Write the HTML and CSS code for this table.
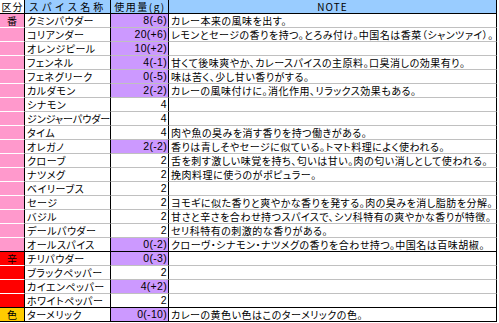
FILE: index.html
```html
<!DOCTYPE html>
<html lang="ja">
<head>
<meta charset="utf-8">
<link rel="stylesheet" href="styles.css">
</head>
<body>
<div class="sheet">
  <div class="row head">
    <div class="c k">区分</div><div class="c n">スパイス名称</div><div class="c q">使用量(g)</div><div class="c note">NOTE</div>
  </div>
  <div class="row"><div class="c k pink">番</div><div class="c n">クミンパウダー</div><div class="c q pur">8(-6)</div><div class="c note">カレー本来の風味を出す。</div></div>
  <div class="row"><div class="c k pink"></div><div class="c n">コリアンダー</div><div class="c q pur">20(+6)</div><div class="c note">レモンとセージの香りを持つ。とろみ付け。中国名は香菜（シャンツァイ）。</div></div>
  <div class="row"><div class="c k pink"></div><div class="c n">オレンジピール</div><div class="c q pur">10(+2)</div><div class="c note"></div></div>
  <div class="row"><div class="c k pink"></div><div class="c n">フェンネル</div><div class="c q pur">4(-1)</div><div class="c note">甘くて後味爽やか、カレースパイスの主原料。口臭消しの効果有り。</div></div>
  <div class="row"><div class="c k pink"></div><div class="c n">フェネグリーク</div><div class="c q pur">0(-5)</div><div class="c note">味は苦く、少し甘い香りがする。</div></div>
  <div class="row"><div class="c k pink"></div><div class="c n">カルダモン</div><div class="c q pur">2(-2)</div><div class="c note">カレーの風味付けに。消化作用、リラックス効果もある。</div></div>
  <div class="row"><div class="c k pink"></div><div class="c n">シナモン</div><div class="c q">4</div><div class="c note"></div></div>
  <div class="row"><div class="c k pink"></div><div class="c n tight">ジンジャーパウダー</div><div class="c q">4</div><div class="c note"></div></div>
  <div class="row"><div class="c k pink"></div><div class="c n">タイム</div><div class="c q">4</div><div class="c note">肉や魚の臭みを消す香りを持つ働きがある。</div></div>
  <div class="row"><div class="c k pink"></div><div class="c n">オレガノ</div><div class="c q pur">2(-2)</div><div class="c note">香りは青しそやセージに似ている。トマト料理によく使われる。</div></div>
  <div class="row"><div class="c k pink"></div><div class="c n">クローブ</div><div class="c q">2</div><div class="c note">舌を刺す激しい味覚を持ち、匂いは甘い。肉の匂い消しとして使われる。</div></div>
  <div class="row"><div class="c k pink"></div><div class="c n">ナツメグ</div><div class="c q">2</div><div class="c note">挽肉料理に使うのがポピュラー。</div></div>
  <div class="row"><div class="c k pink"></div><div class="c n">ベイリーブス</div><div class="c q">2</div><div class="c note"></div></div>
  <div class="row"><div class="c k pink"></div><div class="c n">セージ</div><div class="c q">2</div><div class="c note">ヨモギに似た香りと爽やかな香りを発する。肉の臭みを消し脂肪を分解。</div></div>
  <div class="row"><div class="c k pink"></div><div class="c n">バジル</div><div class="c q">2</div><div class="c note">甘さと辛さを合わせ持つスパイスで、シソ科特有の爽やかな香りが特徴。</div></div>
  <div class="row"><div class="c k pink"></div><div class="c n">デールパウダー</div><div class="c q">2</div><div class="c note">セリ科特有の刺激的な香りがある。</div></div>
  <div class="row end"><div class="c k pink"></div><div class="c n">オールスパイス</div><div class="c q pur">0(-2)</div><div class="c note">クローヴ・シナモン・ナツメグの香りを合わせ持つ。中国名は百味胡椒。</div></div>
  <div class="row"><div class="c k red">辛</div><div class="c n">チリパウダー</div><div class="c q pur">0(-3)</div><div class="c note"></div></div>
  <div class="row"><div class="c k red"></div><div class="c n">ブラックペッパー</div><div class="c q">2</div><div class="c note"></div></div>
  <div class="row"><div class="c k red"></div><div class="c n">カイエンペッパー</div><div class="c q pur">4(+2)</div><div class="c note"></div></div>
  <div class="row end"><div class="c k red"></div><div class="c n">ホワイトペッパー</div><div class="c q">2</div><div class="c note"></div></div>
  <div class="row end"><div class="c k gold">色</div><div class="c n">ターメリック</div><div class="c q pur">0(-10)</div><div class="c note">カレーの黄色い色はこのターメリックの色。</div></div>
</div>
</body>
</html>
```

FILE: styles.css
```css
html, body {
  margin: 0;
  padding: 0;
  background: #fff;
}

.sheet {
  display: grid;
  grid-template-columns: 25px 86px 58px 328px;
  grid-auto-rows: 14px;
  font-family: "Noto Sans CJK JP", "Liberation Sans", sans-serif;
  font-size: 10px;
  letter-spacing: 0.5px;
  font-feature-settings: "palt";
  color: #000;
}

.row {
  display: contents;
}

.c {
  box-sizing: border-box;
  border-right: 1px solid #000;
  border-bottom: 1px solid #c0c0c0;
  line-height: 13px;
  height: 14px;
  white-space: nowrap;
  overflow: hidden;
  padding: 0 2px;
}

.k {
  text-align: center;
  padding: 0;
  font-size: 10px;
  letter-spacing: 0;
}

.n {
  padding-left: 2px;
  font-size: 10px;
  letter-spacing: 0.5px;
}

.n.tight {
  letter-spacing: 0;
}

.q {
  text-align: right;
  font-family: "Liberation Sans", sans-serif;
  font-size: 10.5px;
  letter-spacing: 0.3px;
  padding-right: 1px;
}

.note {
  padding-left: 2px;
}

.head .c {
  background: #99ccff;
  text-align: center;
  border-bottom-color: #000;
  font-family: "Noto Sans CJK JP", sans-serif;
  font-feature-settings: normal;
  font-size: 10px;
  letter-spacing: 1px;
}

.head .n {
  letter-spacing: 3px;
}

.head .q {
  letter-spacing: 1.5px;
}

.head .k {
  background: #fff;
  letter-spacing: 1px;
  text-indent: 1px;
}

.end .c {
  border-bottom-color: #000;
}

.pink { background: #ff99cc; border-bottom-color: #ffffff; }
.red { background: #ff0000; border-bottom-color: #ffffff; }
.gold { background: #ffcc00; }
.pur { background: #cc99ff; }
```
